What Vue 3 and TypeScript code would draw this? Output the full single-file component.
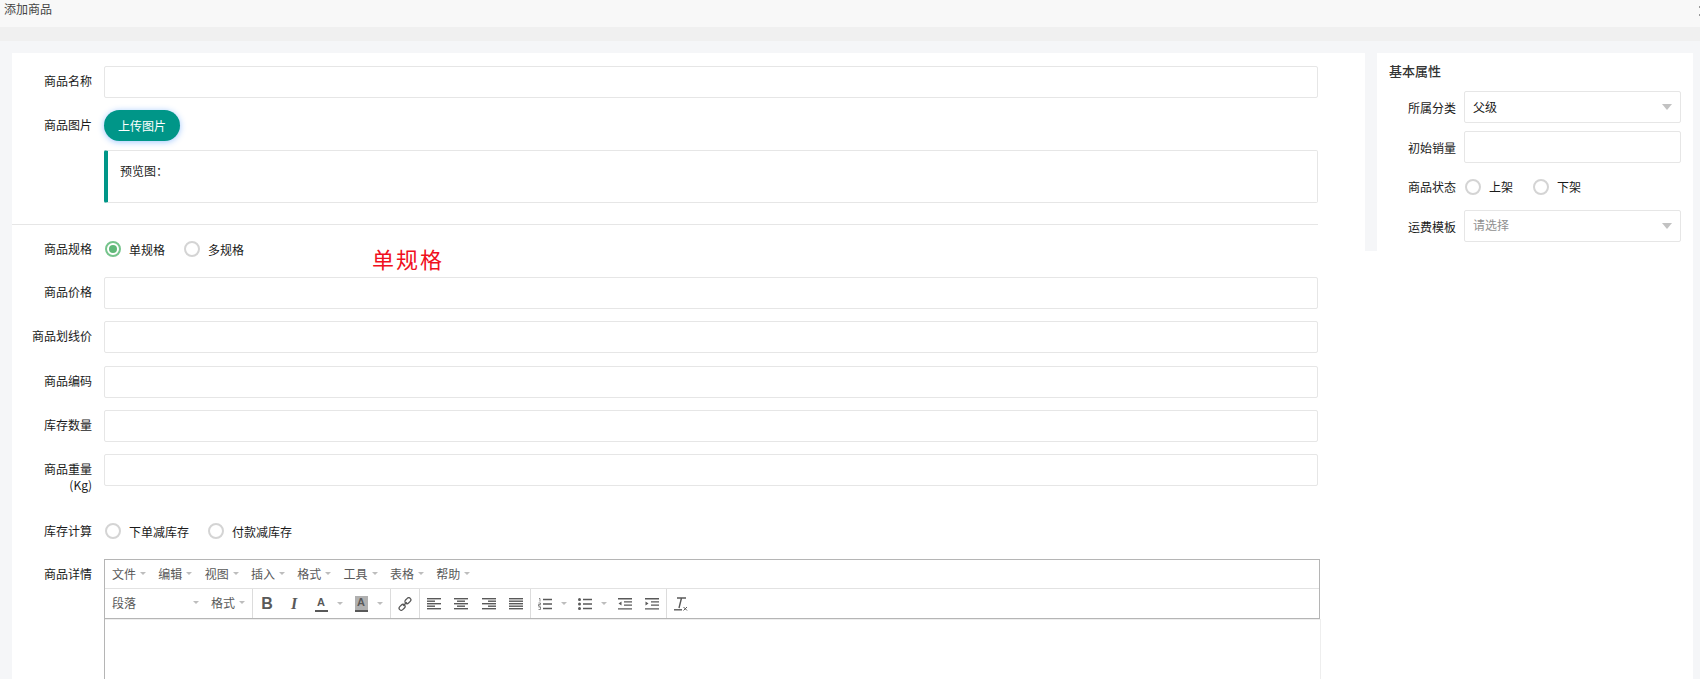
<template>
  <div class="page">
    <div class="title-bar">添加商品<span class="close"></span></div>
    <div class="title-strip"></div>
    <div class="content">
      <div class="main-card">
        <div class="form-top">
          <div class="row row-name">
            <label>商品名称</label>
            <div class="input"></div>
          </div>
          <div class="row row-upload">
            <label>商品图片</label>
            <button class="upload-btn" type="button">上传图片</button>
          </div>
          <div class="preview">预览图：</div>
        </div>
        <div class="divider"></div>
        <div class="row row-radio">
          <label>商品规格</label>
          <div class="radios">
            <span class="radio-item"><i class="radio on"></i>单规格</span>
            <span class="radio-item"><i class="radio"></i>多规格</span>
          </div>
          <span class="spec-note">单规格</span>
        </div>
        <div v-for="f in fields" :key="f" class="row row-field">
          <label>{{ f }}</label>
          <div class="input"></div>
        </div>
        <div class="row row-weight">
          <label>商品重量(Kg)</label>
          <div class="input"></div>
        </div>
        <div class="row row-stock">
          <label>库存计算</label>
          <div class="radios">
            <span class="radio-item"><i class="radio"></i>下单减库存</span>
            <span class="radio-item"><i class="radio"></i>付款减库存</span>
          </div>
        </div>
        <div class="row row-editor">
          <label>商品详情</label>
          <div class="editor">
            <div class="editor-head">
              <div class="menubar">
                <span v-for="m in menus" :key="m" class="menu">{{ m }}<i class="caret"></i></span>
              </div>
              <div class="toolbar">
                <div class="group group-format">
                  <span class="para">段落<i class="caret"></i></span>
                  <span class="menu">格式<i class="caret"></i></span>
                </div>
                <div class="group">
                  <span class="tool glyph bold">B</span>
                  <span class="tool glyph italic">I</span>
                  <span class="tool color"><b>A</b></span><i class="caret split"></i>
                  <span class="tool color back"><b>A</b></span><i class="caret split"></i>
                </div>
                <div class="group">
                  <span class="tool">
                    <svg width="14" height="14" viewBox="0 0 14 14" fill="none" stroke="#595959" stroke-width="1.3">
                      <rect x="6.6" y="1.6" width="6.6" height="4.2" rx="2.1" transform="rotate(-45 9.9 3.7)" />
                      <rect x="0.8" y="8.2" width="6.6" height="4.2" rx="2.1" transform="rotate(-45 4.1 10.3)" />
                      <path d="M5.2 8.8l3.6-3.6" />
                    </svg>
                  </span>
                </div>
                <div class="group group-align">
                  <span v-for="a in aligns" :key="a.id" class="tool">
                    <svg width="14" height="12" viewBox="0 0 14 12">
                      <path v-for="(w, i) in a.lines" :key="i" :d="`M${a.x[i]} ${i * 2.5 + 0.7}h${w}`" stroke="#595959" stroke-width="1.4" />
                    </svg>
                  </span>
                </div>
                <div class="group">
                  <span class="tool">
                    <svg width="14" height="12" viewBox="0 0 14 12" stroke="#595959">
                      <path d="M5 1.5h9M5 6h9M5 10.5h9" stroke-width="1.4" />
                      <path d="M1 0.5h1v3M0.5 5h2v1.5h-2v1.5h2M0.5 9h2v2.5h-2" stroke-width="0.7" fill="none" />
                    </svg>
                  </span><i class="caret split"></i>
                  <span class="tool">
                    <svg width="14" height="12" viewBox="0 0 14 12" fill="#595959">
                      <circle cx="1.5" cy="1.5" r="1.5" /><circle cx="1.5" cy="6" r="1.5" /><circle cx="1.5" cy="10.5" r="1.5" />
                      <path d="M5 1.5h9M5 6h9M5 10.5h9" stroke="#595959" stroke-width="1.4" />
                    </svg>
                  </span><i class="caret split"></i>
                  <span class="tool">
                    <svg width="14" height="12" viewBox="0 0 14 12" fill="#595959">
                      <path d="M0 .7h14M6 3.9h8M6 7.1h8M0 10.9h14" stroke="#595959" stroke-width="1.4" />
                      <path d="M3.5 3.5v4L0.5 5.5z" />
                    </svg>
                  </span>
                  <span class="tool">
                    <svg width="14" height="12" viewBox="0 0 14 12" fill="#595959">
                      <path d="M0 .7h14M6 3.9h8M6 7.1h8M0 10.9h14" stroke="#595959" stroke-width="1.4" />
                      <path d="M0.5 3.5v4L3.5 5.5z" />
                    </svg>
                  </span>
                </div>
                <div class="group last">
                  <span class="tool">
                    <svg width="14" height="14" viewBox="0 0 14 14" fill="none" stroke="#595959">
                      <path d="M3 1h9M7.5 1L5 11" stroke-width="1.4" />
                      <path d="M0 12.8h8" stroke-width="1.4" />
                      <path d="M9.5 10l3.5 3.5M13 10l-3.5 3.5" stroke-width="1" />
                    </svg>
                  </span>
                </div>
              </div>
            </div>
            <div class="edit-area"></div>
          </div>
        </div>
      </div>
      <div class="side-card">
        <h3>基本属性</h3>
        <div class="side-row">
          <label>所属分类</label>
          <div class="select">父级<i class="select-arrow"></i></div>
        </div>
        <div class="side-row">
          <label>初始销量</label>
          <div class="input"></div>
        </div>
        <div class="side-row side-radio">
          <label>商品状态</label>
          <div class="radios">
            <span class="radio-item"><i class="radio"></i>上架</span>
            <span class="radio-item"><i class="radio"></i>下架</span>
          </div>
        </div>
        <div class="side-row">
          <label>运费模板</label>
          <div class="select placeholder">请选择<i class="select-arrow"></i></div>
        </div>
      </div>
    </div>
  </div>
</template>

<script setup lang="ts">
interface AlignIcon {
  id: string;
  lines: number[];
  x: number[];
}

const fields: string[] = ['商品价格', '商品划线价', '商品编码', '库存数量'];
const menus: string[] = ['文件', '编辑', '视图', '插入', '格式', '工具', '表格', '帮助'];

const aligns: AlignIcon[] = [
  { id: 'left', lines: [14, 8, 14, 8, 14], x: [0, 0, 0, 0, 0] },
  { id: 'center', lines: [14, 8, 14, 8, 14], x: [0, 3, 0, 3, 0] },
  { id: 'right', lines: [14, 8, 14, 8, 14], x: [0, 6, 0, 6, 0] },
  { id: 'justify', lines: [14, 14, 14, 14, 14], x: [0, 0, 0, 0, 0] }
];
</script>

<style scoped>
.page {
  height: 679px;
  overflow: hidden;
  background: #fff;
  font-family: "Noto Sans CJK SC", "Liberation Sans", sans-serif;
  font-size: 12px;
  color: #1a1a1a;
}
.title-bar {
  height: 27px;
  line-height: 18px;
  padding-left: 4px;
  background: #f8f8f8;
  color: #444;
  position: relative;
}
.close {
  position: absolute;
  right: 0;
  top: 6px;
  width: 1px;
  height: 2px;
  background: #999;
  box-shadow: 0 8px 0 #999;
}
.title-strip {
  height: 14px;
  background: #f0f0f0;
}
.content {
  display: flex;
  align-items: flex-start;
  padding: 12px 7px 0 12px;
  height: 638px;
  box-sizing: border-box;
  background: linear-gradient(#f5f6f8 210px, #fff 210px);
  position: relative;
}
.content::before,
.content::after {
  content: "";
  position: absolute;
  top: 0;
  bottom: 0;
  background: #f5f6f8;
}
.content::before {
  left: 0;
  width: 12px;
}
.content::after {
  right: 0;
  width: 7px;
}
.main-card {
  width: 1353px;
  height: 626px;
  background: #fff;
  flex: none;
}
.side-card {
  width: 316px;
  margin-left: 12px;
  height: 198px;
  background: #fff;
  padding: 10px 12px 0 12px;
  box-sizing: border-box;
  flex: none;
}
.side-card h3 {
  margin: 0 0 12px;
  font-size: 13px;
  line-height: 16px;
  font-weight: 500;
  color: #333;
}
.row {
  display: flex;
  align-items: flex-start;
  padding-right: 47px;
}
.row label {
  width: 64px;
  margin-left: 16px;
  flex: none;
  text-align: right;
  line-height: 16px;
  margin-right: 12px;
  padding-top: 7px;
}
.input {
  flex: 1;
  height: 32px;
  border: 1px solid #e6e6e6;
  border-radius: 2px;
  box-sizing: border-box;
  background: #fff;
}
.row-name {
  padding-top: 13px;
}
.row-upload {
  padding-top: 12px;
}
.upload-btn {
  width: 76px;
  height: 31px;
  border: none;
  border-radius: 16px;
  background: #009688;
  color: #fff;
  font: inherit;
  padding: 0;
  box-shadow: 0 1px 6px rgba(40, 130, 255, 0.45);
}
.form-top {
  height: 171px;
}
.preview {
  margin: 9px 47px 0 92px;
  height: 53px;
  border: 1px solid #e6e6e6;
  border-left: 4px solid #009688;
  box-sizing: border-box;
  padding: 11px 12px;
  line-height: 18px;
  border-radius: 2px;
}
.divider {
  height: 1px;
  background: #e6e6e6;
  margin-right: 47px;
}
.row-radio {
  height: 52px;
  padding-top: 16px;
  box-sizing: border-box;
  position: relative;
}
.row-radio label,
.row-stock label {
  padding-top: 0;
}
.radios {
  display: flex;
  gap: 20px;
  align-items: center;
  height: 16px;
  margin-left: 1px;
}
.row-radio .radios,
.row-stock .radios {
  gap: 19px;
}
.radio-item {
  display: inline-flex;
  align-items: center;
  gap: 8px;
}
.radio {
  width: 16px;
  height: 16px;
  border: 2px solid #d4d4d4;
  border-radius: 50%;
  box-sizing: border-box;
  position: relative;
  display: block;
}
.radio.on {
  border-color: #76c48c;
}
.radio.on::after {
  content: "";
  position: absolute;
  left: 2px;
  top: 2px;
  width: 8px;
  height: 8px;
  background: #5fb878;
  border-radius: 50%;
}
.spec-note {
  position: absolute;
  left: 360px;
  top: 22px;
  font-size: 22px;
  letter-spacing: 2px;
  line-height: 28px;
  color: #f01020;
  font-family: "Liberation Serif", "Noto Sans CJK SC", serif;
}
.row-field {
  height: 44.25px;
}
.row-weight {
  height: 66px;
}
.row-stock {
  height: 39px;
  padding-top: 3px;
  box-sizing: border-box;
}
.editor {
  flex: 1;
  margin-right: -2px;
  border-left: 1px solid #b5b5b5;
  box-sizing: border-box;
  height: 140px;
}
.editor-head {
  border: 1px solid #b5b5b5;
  border-left: none;
  color: #595959;
}
.menubar {
  height: 29px;
  box-sizing: border-box;
  padding: 0 0 2px 7px;
  display: flex;
  align-items: center;
  gap: 12.3px;
  border-bottom: 1px solid #e2e2e2;
}
.menu {
  display: inline-flex;
  align-items: center;
  gap: 2px;
}
.caret {
  display: inline-block;
  width: 0;
  height: 0;
  border: 3px solid transparent;
  border-top-color: #bdbdbd;
  border-bottom: none;
  margin-left: 2px;
}
.toolbar {
  height: 29px;
  display: flex;
  align-items: stretch;
}
.group {
  display: flex;
  align-items: center;
  gap: 13px;
  padding: 0 7px;
  border-right: 1px solid #dcdcdc;
}
.group.last {
  border-right: none;
}
.group-align {
  gap: 13.3px;
}
.group-format {
  width: 148px;
  box-sizing: border-box;
  gap: 0;
  justify-content: space-between;
  padding-bottom: 2px;
}
.caret.split {
  margin: 0 -2px 0 -4px;
}
.caret.split:last-child {
  margin-right: 0;
}
.para {
  width: 87px;
  display: inline-flex;
  justify-content: space-between;
  align-items: center;
}
.tool {
  width: 14px;
  height: 16px;
  flex: none;
  display: flex;
  align-items: center;
  justify-content: center;
}
.glyph {
  font-size: 16px;
  line-height: 16px;
  font-family: "Liberation Serif", serif;
  font-weight: 700;
}
.bold {
  font-family: "Liberation Sans", sans-serif;
}
.italic {
  font-style: italic;
}
.color b {
  display: block;
  width: 13px;
  height: 14px;
  line-height: 13px;
  font-size: 11px;
  text-align: center;
  border-bottom: 2px solid #595959;
  font-family: "Liberation Sans", sans-serif;
}
.color.back b {
  background: #b0b0b0;
}
.edit-area {
  height: 80px;
  margin-right: -1px;
  border-top: 1px solid #eee;
  border-right: 1px solid #eee;
}
.select {
  flex: 1;
  height: 32px;
  border: 1px solid #e6e6e6;
  border-radius: 2px;
  box-sizing: border-box;
  padding-left: 8px;
  line-height: 30px;
  position: relative;
}
.select.placeholder {
  color: #909090;
  line-height: 28px;
}
.select-arrow {
  position: absolute;
  right: 8px;
  top: 12px;
  width: 0;
  height: 0;
  border: 5px solid transparent;
  border-top: 6px solid #c2c2c2;
  border-bottom: none;
}
.side-row {
  display: flex;
  align-items: center;
  margin-bottom: 8px;
}
.side-row label {
  width: 67px;
  text-align: right;
  margin-right: 8px;
  flex: none;
}
.side-radio {
  height: 31px;
}
</style>
